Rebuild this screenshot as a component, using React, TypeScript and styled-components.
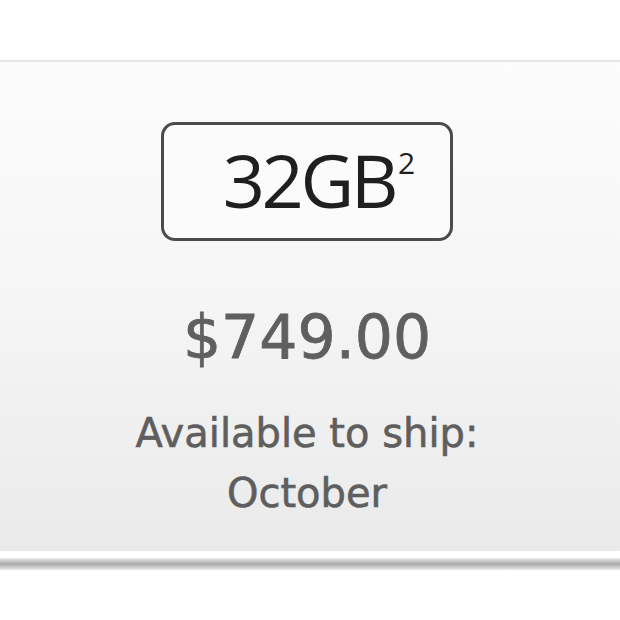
import React from "react";
import styled, { createGlobalStyle } from "styled-components";

const Global = createGlobalStyle`
  html, body { margin: 0; padding: 0; background: #ffffff; }
  body { width: 620px; height: 620px; overflow: hidden; }
`;

const Page = styled.div`
  padding-top: 60px;
  width: 620px;
`;

const Panel = styled.section`
  border-top: 2px solid #e6e6e6;
  height: 491px;
  box-sizing: border-box;
  background: linear-gradient(#fcfcfc 0%, #f6f6f6 45%, #eaeaea 100%);
  display: flex;
  flex-direction: column;
  align-items: center;
  padding-top: 60px;
  padding-right: 6px;
`;

const CapacityBox = styled.div`
  box-sizing: border-box;
  width: 292px;
  height: 119px;
  border: 3px solid #4b4b4b;
  border-radius: 14px;
  background: #fbfbfb;
  display: flex;
  align-items: center;
  justify-content: center;
  padding-left: 24px;
  padding-bottom: 4px;
`;

const Capacity = styled.span`
  font-family: "Open Sans", sans-serif;
  font-size: 74px;
  font-weight: 500;
  letter-spacing: -3.5px;
  color: #1f1f1f;
  line-height: 1;
`;

const Sup = styled.sup`
  font-size: 30px;
  letter-spacing: 0;
  vertical-align: 34px;
  margin-left: 3px;
  line-height: 0;
`;

const Price = styled.div`
  margin-top: 66px;
  font-family: "DejaVu Sans", sans-serif;
  font-size: 60px;
  line-height: 1;
  color: #5f5f5f;
  -webkit-text-stroke: 0.8px #5f5f5f;
`;

const Availability = styled.div`
  margin-top: 36px;
  font-family: "DejaVu Sans", sans-serif;
  font-size: 40px;
  line-height: 60px;
  color: #5e5e5e;
  -webkit-text-stroke: 0.6px #5e5e5e;
  text-align: center;
`;

const Shadow = styled.div`
  margin-top: 7px;
  height: 12px;
  background: linear-gradient(#ececec, #a9a9a9 50%, #ececec);
`;

export default function App() {
  return (
    <Page>
      <Global />
      <Panel>
        <CapacityBox>
          <Capacity>
            32GB<Sup>2</Sup>
          </Capacity>
        </CapacityBox>
        <Price>$749.00</Price>
        <Availability>
          Available to ship:
          <br />
          October
        </Availability>
      </Panel>
      <Shadow />
    </Page>
  );
}
